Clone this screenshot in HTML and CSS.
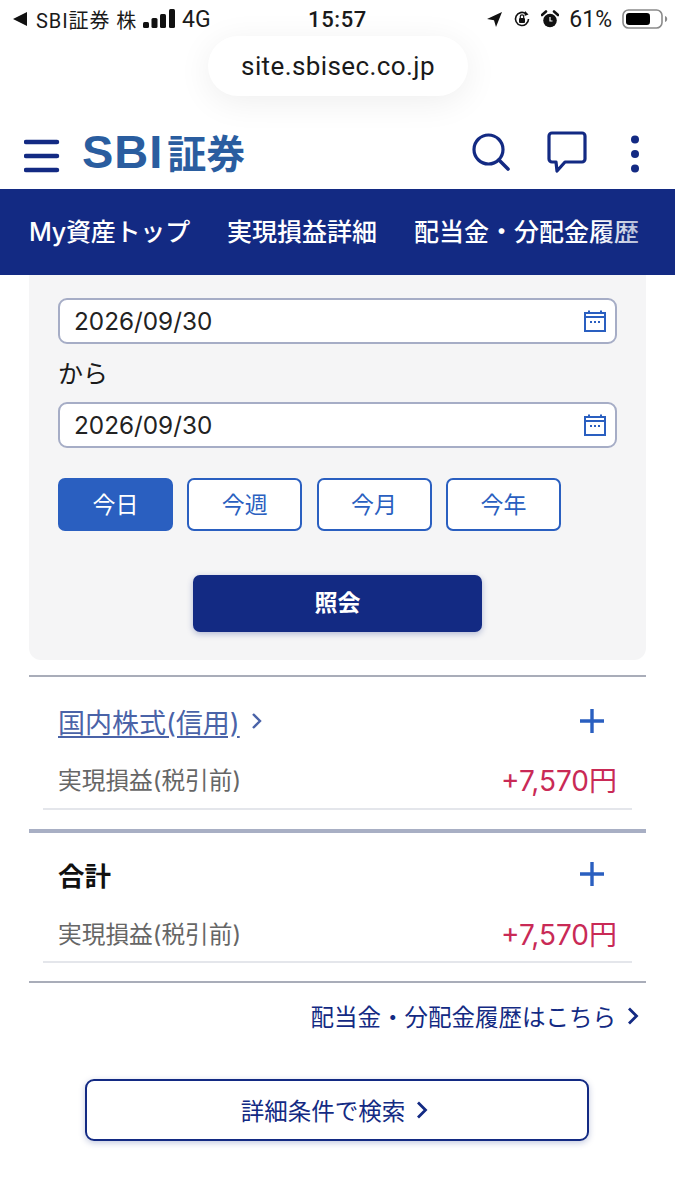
FILE: index.html
```html
<!DOCTYPE html>
<html lang="ja">
<head>
<meta charset="utf-8">
<title>SBI証券</title>
<link rel="stylesheet" href="styles.css">
</head>
<body>
<div class="page">
  <div class="status">
    <div class="status-left">
      <svg class="back" width="14" height="14" viewBox="0 0 14 14"><path d="M0 7 14 0V14Z" fill="#111"/></svg>
      <span class="carrier">SBI証券 株</span>
      <svg class="signal" width="32" height="20" viewBox="0 0 32 20"><rect x="0" y="13" width="6" height="6" rx="1.500"/><rect x="8.500" y="9" width="6" height="10" rx="1.500"/><rect x="17" y="5" width="6" height="14" rx="1.500"/><rect x="26" y="0" width="6" height="19" rx="1.500"/></svg>
      <span class="net">4G</span>
    </div>
    <div class="clock">15:57</div>
    <div class="status-right">
      <svg width="17" height="17" viewBox="0 0 17 17"><path d="M16 1 1 8l7 1.200L10 16Z" fill="#111"/></svg>
      <svg class="si-lock" width="18" height="18" viewBox="0 0 18 18"><path d="M15.500 9A6.500 6.500 0 1 1 13 3.800" fill="none" stroke="#111" stroke-width="1.600"/><path d="M12 1l3.500 3.400L11.500 6Z" fill="#111"/><rect x="6" y="8" width="6" height="5" rx="1" fill="#111"/><path d="M7.300 8V6.600a1.700 1.700 0 0 1 3.400 0V8" fill="none" stroke="#111" stroke-width="1.200"/></svg>
      <svg class="si-alarm" width="18" height="19" viewBox="0 0 18 19"><circle cx="9" cy="10.500" r="6.800" fill="#111"/><path d="M1 5 5 1.500M17 5 13 1.500" stroke="#111" stroke-width="2.600" stroke-linecap="round"/><path d="M9 7v4h2.500" fill="none" stroke="#fff" stroke-width="1.200"/></svg>
      <span class="pct">61%</span>
      <svg class="battery" width="46" height="20" viewBox="0 0 46 20"><rect x="1" y="1" width="39" height="18" rx="5.500" fill="none" stroke="#8a8a8a" stroke-width="1.600"/><rect x="4" y="4" width="24" height="12" rx="3.200" fill="#000"/><path d="M43 7c1.600.5 2.200 1.600 2.200 3s-.6 2.500-2.200 3Z" fill="#8a8a8a"/></svg>
    </div>
  </div>
  <div class="url">site.sbisec.co.jp</div>

  <header class="header">
    <div class="brand">
      <svg class="menu" width="36" height="36" viewBox="0 0 36 36"><path d="M2 4H33M2 18H33M2 32H33" stroke="#132a83" stroke-width="4.500" stroke-linecap="round"/></svg>
      <div class="logo"><span class="logo-en">SBI</span><span class="logo-ja">証券</span></div>
    </div>
    <div class="tools">
      <svg class="tool-search" width="38" height="38" viewBox="0 0 38 38"><circle cx="16.500" cy="16.500" r="14.500" fill="none" stroke="#132a83" stroke-width="3.200"/><path d="M27 27l9 9" stroke="#132a83" stroke-width="3.600" stroke-linecap="round"/></svg>
      <svg class="tool-chat" width="40" height="42" viewBox="0 0 40 42"><path d="M5 2H35a3 3 0 0 1 3 3V28a3 3 0 0 1-3 3H18L10 40 9 31H5a3 3 0 0 1-3-3V5a3 3 0 0 1 3-3Z" fill="none" stroke="#132a83" stroke-width="3.200" stroke-linejoin="round"/></svg>
      <svg class="tool-dots" width="10" height="38" viewBox="0 0 10 38"><circle cx="5" cy="4.500" r="4" fill="#132a83"/><circle cx="5" cy="19" r="4" fill="#132a83"/><circle cx="5" cy="33.500" r="4" fill="#132a83"/></svg>
    </div>
  </header>

  <nav class="nav">
    <span>My資産トップ</span>
    <span>実現損益詳細</span>
    <span>配当金・分配金履歴</span>
  </nav>

  <main class="main">
    <section class="panel">
      <div class="field"><span>2026/09/30</span>
        <svg width="24" height="24" viewBox="0 0 24 24"><path d="M2 4H22V22H2Z" fill="none" stroke="#2a5fc0" stroke-width="2"/><path d="M2 8H22" stroke="#2a5fc0" stroke-width="2"/><path d="M6 1.500V4M18 1.500V4" stroke="#2a5fc0" stroke-width="2"/><path d="M7 13h2M11 13h2M15 13h2" stroke="#2a5fc0" stroke-width="2"/></svg>
      </div>
      <div class="kara">から</div>
      <div class="field"><span>2026/09/30</span>
        <svg width="24" height="24" viewBox="0 0 24 24"><path d="M2 4H22V22H2Z" fill="none" stroke="#2a5fc0" stroke-width="2"/><path d="M2 8H22" stroke="#2a5fc0" stroke-width="2"/><path d="M6 1.500V4M18 1.500V4" stroke="#2a5fc0" stroke-width="2"/><path d="M7 13h2M11 13h2M15 13h2" stroke="#2a5fc0" stroke-width="2"/></svg>
      </div>
      <div class="chips">
        <div class="chip chip-on">今日</div>
        <div class="chip">今週</div>
        <div class="chip">今月</div>
        <div class="chip">今年</div>
      </div>
      <div class="submit">照会</div>
    </section>

    <section class="group group-first">
      <div class="row-head">
        <div class="title-link"><a class="link">国内株式(信用)</a>
          <svg width="12" height="20" viewBox="0 0 12 20"><path d="M2 3l7 7-7 7" fill="none" stroke="#4a63a8" stroke-width="2.400"/></svg>
        </div>
        <svg class="plus" width="26" height="26" viewBox="0 0 26 26"><path d="M13 1V25M1 13H25" stroke="#2a5fc0" stroke-width="3.400"/></svg>
      </div>
      <div class="row-value"><span class="label">実現損益(税引前)</span><span class="amount">+7,570円</span></div>
    </section>

    <section class="group group-total">
      <div class="row-head">
        <div class="title">合計</div>
        <svg class="plus" width="26" height="26" viewBox="0 0 26 26"><path d="M13 1V25M1 13H25" stroke="#2a5fc0" stroke-width="3.400"/></svg>
      </div>
      <div class="row-value"><span class="label">実現損益(税引前)</span><span class="amount">+7,570円</span></div>
    </section>

    <div class="more">
      <span>配当金・分配金履歴はこちら</span>
      <svg width="12" height="20" viewBox="0 0 12 20"><path d="M2 2.500 9.500 10 2 17.500" fill="none" stroke="#132a83" stroke-width="2.800"/></svg>
    </div>
    <div class="detail">
      <span>詳細条件で検索</span>
      <svg width="12" height="20" viewBox="0 0 12 20"><path d="M2 2.500 9.500 10 2 17.500" fill="none" stroke="#132a83" stroke-width="2.800"/></svg>
    </div>
  </main>
</div>
</body>
</html>
```

FILE: styles.css
```css
* { box-sizing: border-box; }
html, body { margin: 0; padding: 0; background: #fff; }
body { font-family: "Inter", "Noto Sans CJK JP", sans-serif; color: #1a1a1a; }
.page { position: relative; width: 675px; height: 1200px; overflow: hidden; background: #fff; }

.status { height: 36px; display: grid; grid-template-columns: 1fr auto 1fr; align-items: center; padding: 2px 7px 0 13px; }
.status-left { display: flex; align-items: center; font-size: 20px; }
.back { margin-right: 9px; }
.carrier { font-family: "Roboto", "Noto Sans CJK JP", sans-serif; letter-spacing: .9px; }
.signal { margin: 0 7px 0 6px; fill: #111; }
.net { font-family: "Roboto", sans-serif; font-size: 23px; }
.clock { font-family: "Roboto", sans-serif; font-size: 22px; font-weight: 500; letter-spacing: .6px; margin-right: 6px; }
.status-right { display: flex; align-items: center; justify-content: flex-end; gap: 10px; }
.pct { font-family: "Roboto", sans-serif; font-size: 23px; }

.url { position: absolute; left: 208px; top: 36px; width: 260px; height: 60px; border-radius: 30px; background: #fff; box-shadow: 0 6px 34px rgba(0,0,0,.07); display: flex; align-items: center; justify-content: center; font-family: "Roboto", sans-serif; font-size: 26px; letter-spacing: .4px; color: #1a1a1a; }

.header { height: 153px; padding: 78px 35px 0 24px; display: flex; align-items: center; justify-content: space-between; }
.brand { display: flex; align-items: center; gap: 22px; }
.menu { margin-top: 8px; }
.logo { display: flex; align-items: center; color: #2a5d9f; line-height: 1; }
.logo-en { font-family: "Liberation Sans", sans-serif; font-weight: 700; font-size: 47px; letter-spacing: 1px; }
.logo-ja { font-family: "Noto Sans CJK JP", sans-serif; font-weight: 700; font-size: 39px; margin-left: 4px; }
.tools { display: flex; align-items: center; gap: 37px; }
.tool-chat { margin-right: 6px; }
.tool-search, .tool-chat { margin-top: 1px; }
.tool-dots { margin-top: 4px; }

.nav { position: relative; height: 86px; background: #132a83; color: #fff; display: flex; align-items: center; gap: 37px; padding: 0 0 4px 29px; font-size: 25px; font-weight: 500; white-space: nowrap; overflow: hidden; }
.nav span:first-child { letter-spacing: -.2px; }
.nav::after { content: ""; position: absolute; right: 33px; top: 0; width: 45px; height: 100%; background: linear-gradient(90deg, rgba(19,42,131,0), rgba(19,42,131,.35)); }

.main { padding: 0 29px; }
.panel { height: 385px; background: #f5f5f6; border-radius: 0 0 12px 12px; padding: 23px 29px 0; }
.field { height: 46px; background: #fff; border: 2px solid #a6adc6; border-radius: 9px; padding: 0 8px 0 14px; display: flex; align-items: center; justify-content: space-between; font-size: 24.300px; color: #222; }
.kara { height: 58px; padding-bottom: 2px; display: flex; align-items: center; font-size: 25px; color: #1a1a1a; }
.chips { display: flex; gap: 14.300px; margin-top: 30px; }
.chip { width: 115px; height: 53px; padding-bottom: 3px; border: 2px solid #2a5fc0; border-radius: 7px; background: #fff; color: #2a5fc0; display: flex; align-items: center; justify-content: center; font-size: 23px; }
.chip-on { background: #2a5fc0; color: #fff; }
.submit { width: 289px; height: 57px; margin: 44px auto 0; padding-bottom: 5px; background: #132a83; color: #fff; border-radius: 7px; box-shadow: 0 2px 6px rgba(19,42,131,.3); display: flex; align-items: center; justify-content: center; font-size: 23px; font-weight: 700; }

.group { padding: 0 14px; }
.group-first { margin-top: 15px; border-top: 2px solid #a9adb9; height: 154px; }
.group-total { border-top: 4px solid #a8afc4; height: 154px; border-bottom: 2px solid #a9adb9; }
.row-head { height: 86px; display: flex; align-items: center; justify-content: space-between; padding: 14px 27px 12px 15px; }
.group-total .row-head { height: 89px; padding-top: 2px; padding-bottom: 9px; }
.title-link { display: flex; align-items: center; gap: 11px; }
.link { color: #4a63a8; font-size: 27px; text-decoration: underline; text-underline-offset: 3px; }
.title { font-size: 26.500px; font-weight: 700; color: #111; }
.row-value { height: 44px; margin-top: 3px; display: flex; align-items: flex-start; justify-content: space-between; padding: 0 15px; border-bottom: 2px solid #e4e6eb; }
.group-total .row-value { height: 43px; margin-top: -2px; }
.label { font-size: 23.700px; color: #666; line-height: 30px; }
.amount { font-size: 28px; color: #c92a56; line-height: 30px; }

.more { height: 66px; display: flex; align-items: center; justify-content: flex-end; gap: 11px; padding: 0 7px 0 0; color: #132a83; font-size: 23.500px; }
.detail { width: 504px; height: 62px; margin: 30px 0 0 56px; padding-right: 5px; border: 2px solid #132a83; border-radius: 9px; box-shadow: 0 2px 6px rgba(19,42,131,.25); display: flex; align-items: center; justify-content: center; gap: 11px; color: #132a83; font-size: 23.500px; }
```
